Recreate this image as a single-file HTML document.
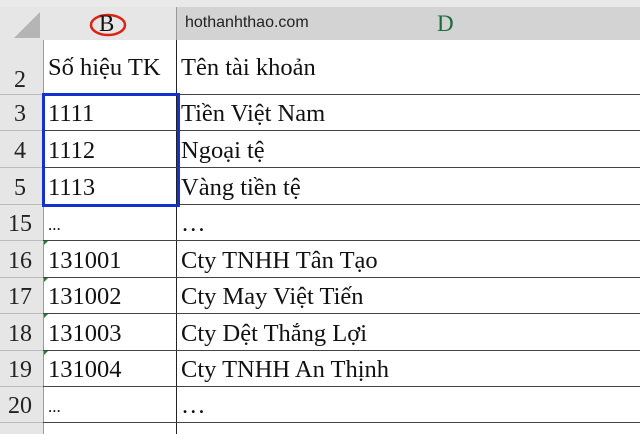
<!DOCTYPE html><html><head><style>
body{margin:0;width:640px;height:434px;overflow:hidden;background:#fff;font-family:"Liberation Serif",serif;position:relative}
.a{position:absolute}
.t{position:absolute;font-size:24.5px;color:#111;white-space:nowrap;margin-top:2px}
.n{position:absolute;left:0;width:40px;text-align:center;font-size:24px;color:#222;margin-top:3px}
.h{position:absolute;left:0;width:640px;height:1px;background:#444}
.g{position:absolute;left:0;width:43px;height:1px;background:#bbb}
</style></head><body>
<div class="a" style="left:0;top:0;width:640px;height:7px;background:#e9e9e9"></div>
<div class="a" style="left:0;top:7px;width:43px;height:427px;background:#e6e6e6"></div>
<div class="a" style="left:43px;top:7px;width:133px;height:33px;background:#e6e6e6"></div>
<div class="a" style="left:176px;top:7px;width:464px;height:33px;background:#d3d3d3"></div>
<svg class="a" style="left:12px;top:10px" width="30" height="30"><polygon points="28,2 28,28 2,28" fill="#b5b5b5"/></svg>
<svg class="a" style="left:88px;top:12px" width="40" height="26"><ellipse cx="20" cy="13" rx="17" ry="10" fill="none" stroke="#d21" stroke-width="2.5"/></svg>
<div class="t" style="left:99px;top:9px;font-size:23px">B</div>
<div class="a" style="left:176px;top:7px;width:1px;height:33px;background:#999"></div>
<div class="a" style="left:185px;top:14px;font-family:'Liberation Sans',sans-serif;font-size:16px;color:#222">hothanhthao.com</div>
<div class="t" style="left:437px;top:9px;color:#1e6b3e;font-size:23px">D</div>
<div class="a" style="left:43px;top:40px;width:1px;height:394px;background:#999"></div>
<div class="a" style="left:176px;top:40px;width:1px;height:394px;background:#222"></div>
<div class="h" style="top:94px"></div><div class="h" style="top:130px"></div><div class="h" style="top:167px"></div><div class="h" style="top:204px"></div><div class="h" style="top:240px"></div><div class="h" style="top:277px"></div><div class="h" style="top:313px"></div><div class="h" style="top:350px"></div><div class="h" style="top:386px"></div><div class="h" style="top:422px"></div>
<div class="g" style="top:94px"></div><div class="g" style="top:130px"></div><div class="g" style="top:167px"></div><div class="g" style="top:204px"></div><div class="g" style="top:240px"></div><div class="g" style="top:277px"></div><div class="g" style="top:313px"></div><div class="g" style="top:350px"></div><div class="g" style="top:386px"></div><div class="g" style="top:422px"></div>
<div class="n" style="top:64px">2</div><div class="n" style="top:98px">3</div><div class="n" style="top:135px">4</div><div class="n" style="top:172px">5</div><div class="n" style="top:208px">15</div><div class="n" style="top:245px">16</div><div class="n" style="top:281px">17</div><div class="n" style="top:318px">18</div><div class="n" style="top:354px">19</div><div class="n" style="top:390px">20</div>
<div class="t" style="left:48px;top:52px">Số hiệu TK</div><div class="t" style="left:181px;top:52px">Tên tài khoản</div>
<div class="t" style="left:48px;top:98px">1111</div><div class="t" style="left:181px;top:98px">Tiền Việt Nam</div>
<div class="t" style="left:48px;top:135px">1112</div><div class="t" style="left:181px;top:135px">Ngoại tệ</div>
<div class="t" style="left:48px;top:172px">1113</div><div class="t" style="left:181px;top:172px">Vàng tiền tệ</div>
<div class="t" style="left:48px;font-size:17px;top:213px">...</div><div class="t" style="left:181px;top:208px">…</div>
<div class="t" style="left:48px;top:245px">131001</div><div class="t" style="left:181px;top:245px">Cty TNHH Tân Tạo</div>
<div class="t" style="left:48px;top:281px">131002</div><div class="t" style="left:181px;top:281px">Cty May Việt Tiến</div>
<div class="t" style="left:48px;top:318px">131003</div><div class="t" style="left:181px;top:318px">Cty Dệt Thắng Lợi</div>
<div class="t" style="left:48px;top:354px">131004</div><div class="t" style="left:181px;top:354px">Cty TNHH An Thịnh</div>
<div class="t" style="left:48px;font-size:17px;top:395px">...</div><div class="t" style="left:181px;top:390px">…</div>
<svg class="a" style="left:44px;top:241px" width="5" height="150"><polygon points="0,0 4,0 0,4" fill="#2a7a3a"/><polygon points="0,37 4,37 0,41" fill="#2a7a3a"/><polygon points="0,73 4,73 0,77" fill="#2a7a3a"/><polygon points="0,110 4,110 0,114" fill="#2a7a3a"/></svg>
<div class="a" style="left:42px;top:93px;width:132px;height:108px;border:3px solid #1530d0"></div>
</body></html>
